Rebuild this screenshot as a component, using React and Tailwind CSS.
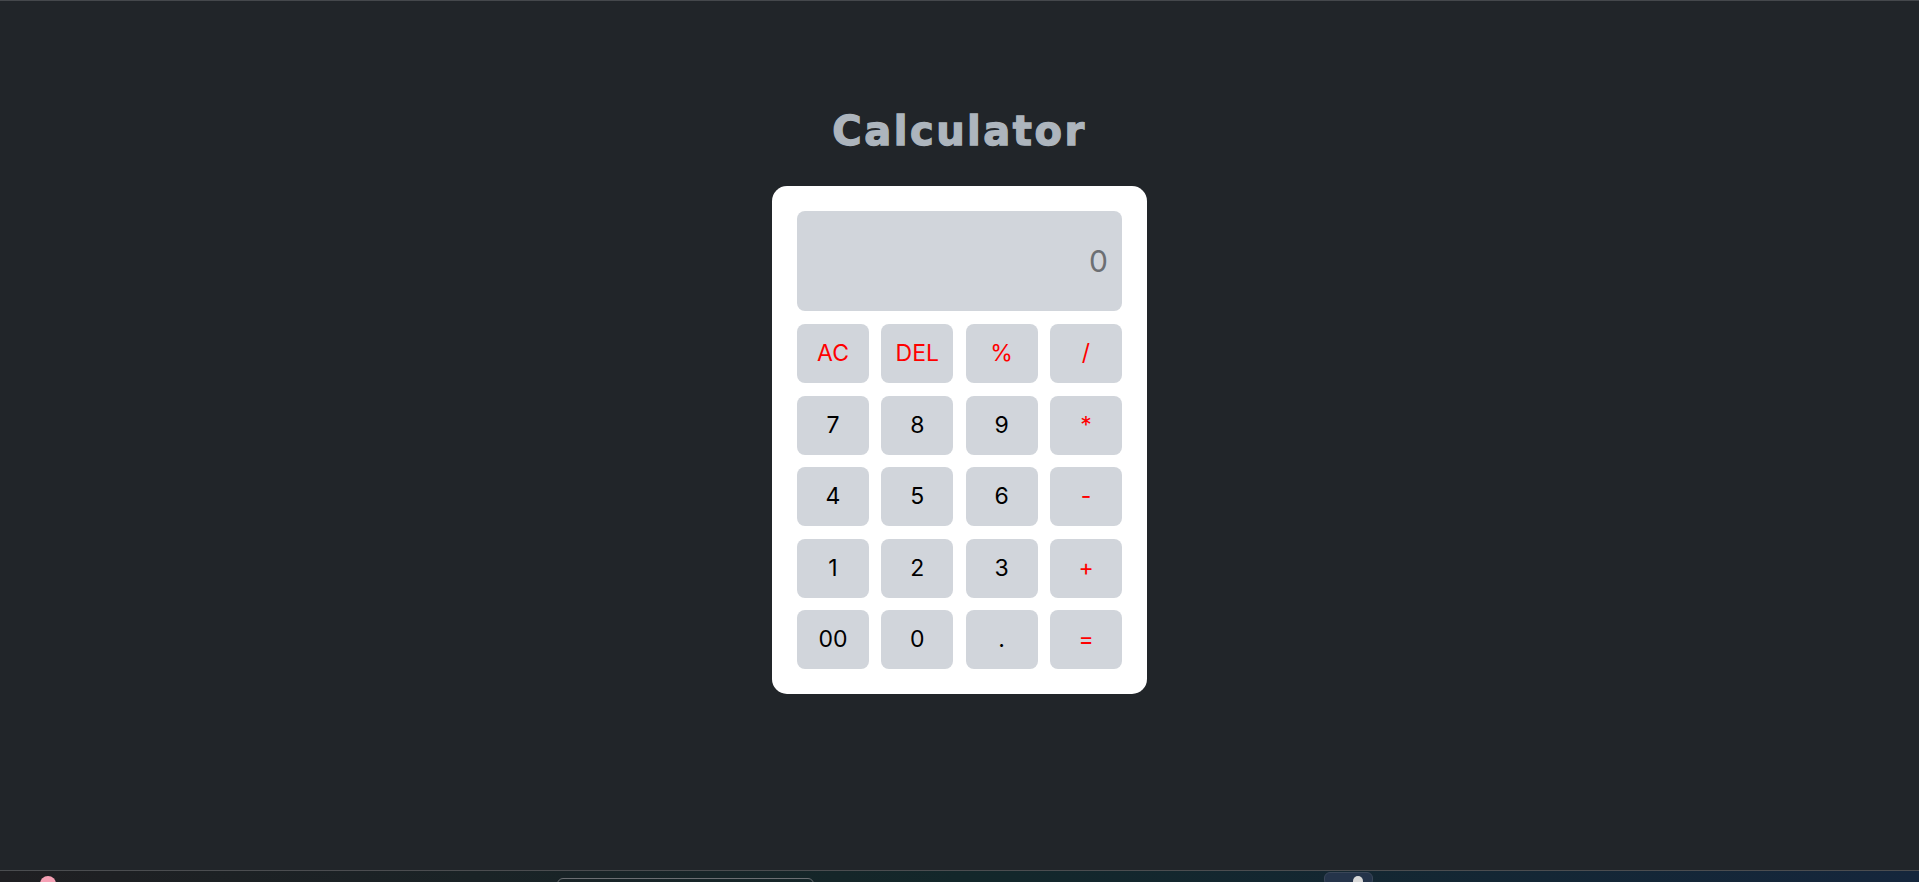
import React from "react";

const rows = [
  [["AC", true], ["DEL", true], ["%", true], ["/", true]],
  [["7"], ["8"], ["9"], ["*", true]],
  [["4"], ["5"], ["6"], ["-", true]],
  [["1"], ["2"], ["3"], ["+", true]],
  [["00"], ["0"], ["."], ["=", true]],
];

export default function App() {
  return (
    <div className="h-[882px] w-full bg-[#212529] flex flex-col overflow-hidden border-t border-[#45484c]" style={{ fontFamily: "Inter, 'Noto Sans', sans-serif" }}>
      <div className="flex-1 flex flex-col items-center pt-[106px]">
        <h1 className="text-[40px] leading-[48px] font-bold text-[#adb5bd] tracking-[2.5px] [-webkit-text-stroke:1.3px_#adb5bd]" style={{ fontFamily: "'DejaVu Sans', sans-serif" }}>Calculator</h1>
        <div className="mt-[31px] w-[375px] bg-white rounded-[15px] p-[25px]">
          <div className="h-[100px] bg-[#d1d5db] rounded-lg flex items-center justify-end pr-[14px] text-[30px] text-[#6c6f73]">0</div>
          <div className="mt-[13px] grid grid-cols-4 gap-x-[12.33px] gap-y-[12.5px]">
            {rows.flat().map(([label, red], i) => (
              <button key={i} className={`h-[59px] rounded-lg bg-[#d1d5db] flex items-center justify-center text-[23px] ${red ? "text-[#ff0000]" : "text-black"}`}>
                {label}
              </button>
            ))}
          </div>
        </div>
      </div>
      <div className="h-[12px] border-t border-[#4b4d50] bg-gradient-to-r from-[#1f1f22] via-[#13272a] to-[#15263c] relative shrink-0">
        <div className="absolute left-[40px] top-[5px] w-[16px] h-[16px] rounded-full bg-[#f4a0b4]" />
        <div className="absolute left-[557px] top-[7px] w-[257px] h-[12px] rounded-t-md border border-[#6b6e72]" />
        <div className="absolute left-[1324px] top-[1px] w-[49px] h-[14px] rounded-md bg-[#25344a] border border-[#3a4658]">
          <div className="absolute left-[28px] top-[3px] w-[10px] h-[10px] rounded-full bg-[#d8d8d8]" />
        </div>
      </div>
    </div>
  );
}
